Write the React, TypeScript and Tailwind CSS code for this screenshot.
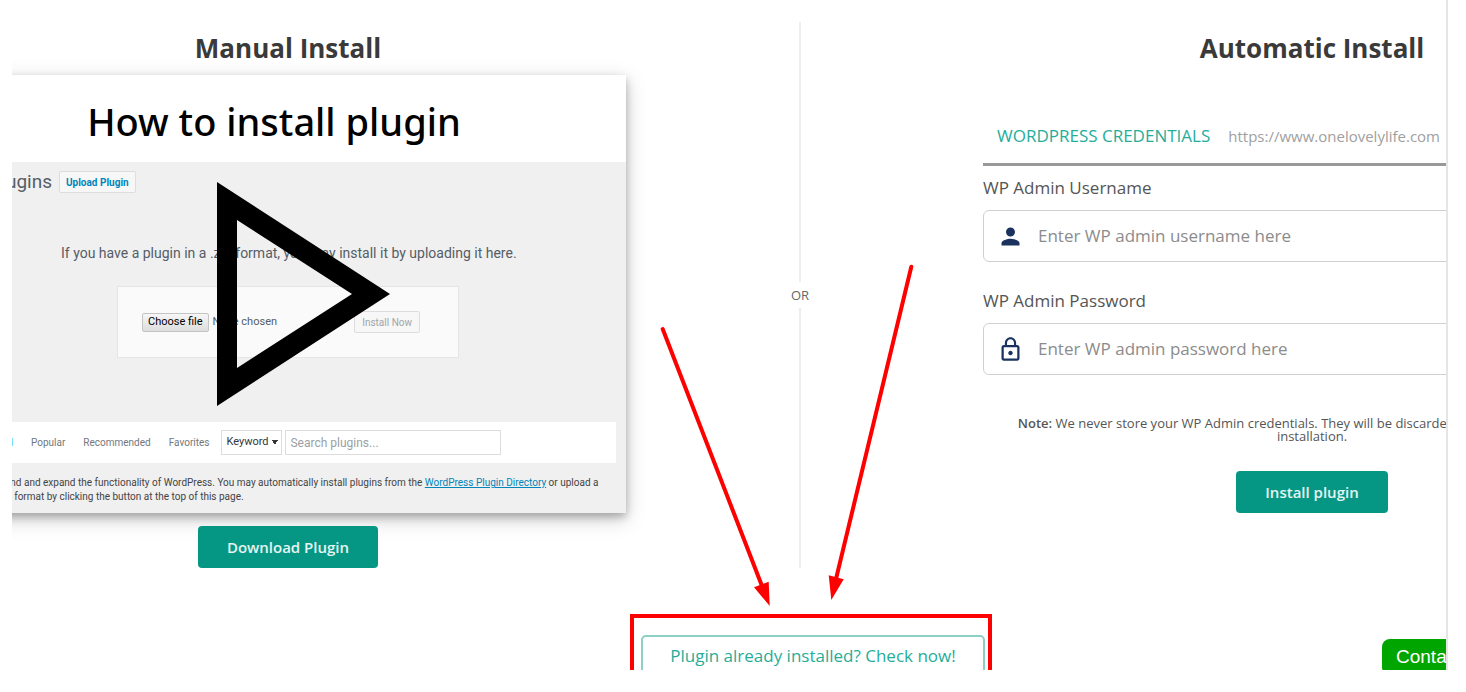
import React from "react";
import { MdLockOutline, MdPerson } from "react-icons/md";

const tabs = ["Popular", "Recommended", "Favorites"];

function VideoPreview() {
  return (
    <div className="relative w-full bg-[#f0f0f0] font-[Roboto,sans-serif] text-[#555d66] shadow-[0_4px_8px_rgba(0,0,0,0.25),0_6px_20px_rgba(0,0,0,0.19)]">
      <div className="flex h-[87px] items-center justify-center bg-white pr-7 pt-1">
        <h3 className="font-['Noto_Sans',sans-serif] text-[38px] font-medium leading-10 text-black">How to install plugin</h3>
      </div>

      <div className="flex h-10 items-center gap-[7px]">
        <h4 className="w-[102px] text-right text-[19px] leading-6">Plugins</h4>
        <button type="button" className="h-[22px] rounded-xs border border-[#dddddd] bg-[#f7f7f7] px-1.5 text-[10px] font-bold text-[#0085ba]">
          Upload Plugin
        </button>
      </div>

      <p className="mt-[39px] pl-[111px] text-sm leading-6">If you have a plugin in a .zip format, you may install it by uploading it here.</p>

      <div className="ml-[167px] mt-[21px] flex h-[72px] w-[342px] items-center border border-[#e5e5e5] bg-[#fafafa] pl-6 pr-[38px] text-[11px]">
        <button type="button" className="h-[19px] rounded-xs border border-[#c4c4c4] bg-linear-to-b from-[#f6f6f6] to-[#dddddd] px-[5px] leading-4 text-black">
          Choose file
        </button>
        <span className="ml-1">None chosen</span>
        <button type="button" className="ml-auto h-[22px] rounded-xs border border-[#dddddd] bg-[#f7f7f7] px-[7px] text-[10px] text-[#a0a5aa]">
          Install Now
        </button>
      </div>

      <div className="mr-2.5 mt-16 flex h-[41px] items-center bg-white text-[10px]">
        <span className="w-[63px] text-right text-[#0073aa]">Featured</span>
        <nav className="ml-[18px] flex gap-[18px]">
          {tabs.map((tab) => (
            <a key={tab} href="#" className="text-[#72777c]">{tab}</a>
          ))}
        </nav>
        <select aria-label="Search by" className="ml-3 h-[25px] w-[61px] appearance-none border border-[#dddddd] bg-white bg-[linear-gradient(to_top_right,transparent_50%,#32373c_50%),linear-gradient(to_top_left,transparent_50%,#32373c_50%)] bg-[length:3px_5px] bg-[position:50px_9px,53px_9px] bg-no-repeat px-1 text-[11px] text-[#32373c]">
          <option>Keyword</option>
        </select>
        <input aria-label="Search plugins" placeholder="Search plugins..." className="ml-[3px] h-[25px] w-[216px] border border-[#dddddd] bg-white px-1 text-xs placeholder:text-[#9a9fa4]" />
      </div>

      <p className="whitespace-nowrap pb-[9px] pl-1.5 pt-[13px] text-[10px] leading-[14px] text-[#444444]">
        Plugins extend and expand the functionality of WordPress. You may automatically install plugins from the{" "}
        <a href="#" className="text-[#0085ba] underline">WordPress Plugin Directory</a> or upload a
        <br />
        plugin in .zip format by clicking the button at the top of this page.
      </p>

      <button type="button" aria-label="Play video" className="absolute left-[267px] top-[107px]">
        <svg width="173" height="224" viewBox="0 0 173 224" className="block">
          <path d="M0 0L173 112L0 224ZM20 38V186L135 112Z" fill="#000" fillRule="evenodd" />
        </svg>
      </button>
    </div>
  );
}

function Field({ id, label, placeholder, type, icon }: { id: string; label: string; placeholder: string; type: string; icon: React.ReactNode }) {
  return (
    <div>
      <label htmlFor={id} className="block text-[17px] leading-6 text-[#555555]">{label}</label>
      <div className="mt-2.5 flex h-[52px] items-center rounded-md border border-[#d0d0d0] pl-[13px] text-[#1b325f]">
        {icon}
        <input id={id} type={type} placeholder={placeholder} className="ml-3.5 min-w-0 flex-1 bg-transparent text-[17px] outline-none placeholder:text-[#8c8c8c]" />
      </div>
    </div>
  );
}

function Arrows() {
  return (
    <svg className="pointer-events-none absolute left-0 top-0" width="348" height="614" viewBox="626 0 348 614" aria-hidden="true">
      <g stroke="#ff0000" strokeWidth="4" strokeLinecap="round">
        <path d="M662.7 329L762 586" />
        <path d="M911.3 266.7L836 579" />
      </g>
      <path d="M769.7 606L754 587.3L768.7 581.7ZM831.3 600L828.7 575.3L843.7 579.3Z" fill="#ff0000" />
    </svg>
  );
}

export default function App() {
  return (
    <div className="bg-white pl-3 pr-[18px] font-['Open_Sans',sans-serif]">
      <div className="overflow-hidden border-r-2 border-[#e5e5e5]">
        <main className="flex h-[614px]">
          <section className="-ml-[62px] flex w-[676px] shrink-0 flex-col items-center">
            <h2 className="flex h-[75px] items-center pt-[21px] text-[26px] font-bold text-[#3a3a3a]">Manual Install</h2>
            <VideoPreview />
            <button type="button" className="relative mt-[13px] h-[42px] rounded bg-[#059783] px-[29px] text-[15px] font-semibold text-white/90">Download Plugin</button>
          </section>

          <div className="relative flex min-w-0 flex-1 flex-col items-center pb-[46px] pt-[22px]">
            <div className="w-0.5 flex-1 bg-[#eeeeee]" />
            <span className="py-1 text-[13px] leading-[18px] text-[#666666]">OR</span>
            <div className="w-0.5 flex-1 bg-[#eeeeee]" />
            <Arrows />
          </div>

          <section className="w-[472px] shrink-0 pl-[9px]">
            <div className="flex w-[658px] flex-col">
              <h2 className="flex h-[75px] items-center justify-center pt-[21px] text-[26px] font-bold text-[#3a3a3a]">Automatic Install</h2>
              <div className="mt-11 flex h-[47px] items-start gap-[18px] border-b-[3px] border-[#999999] px-3.5 pt-[5px]">
                <span className="text-[17px] leading-6 text-[#26ad9a]">WORDPRESS CREDENTIALS</span>
                <span className="text-[15px] leading-6 text-[#a0a0a0]">https://www.onelovelylife.com</span>
              </div>
              <form className="flex flex-col pt-2.5">
                <div className="flex flex-col gap-[27px]">
                  <Field id="username" type="text" label="WP Admin Username" placeholder="Enter WP admin username here" icon={<MdPerson size={27} />} />
                  <Field id="password" type="password" label="WP Admin Password" placeholder="Enter WP admin password here" icon={<MdLockOutline size={27} />} />
                </div>
                <p className="mt-[42px] px-6 text-center text-[13px] leading-[13px] text-[#555555]">
                  <b className="font-semibold">Note:</b> We never store your WP Admin credentials. They will be discarded immediately after plugin installation.
                </p>
                <button type="button" className="mt-7 h-[42px] self-center rounded bg-[#059783] px-[29px] text-[15px] font-semibold text-white/90">Install plugin</button>
              </form>
            </div>
          </section>
        </main>

        <footer className="flex h-14 items-start overflow-hidden">
          <div className="ml-[618px] h-20 w-[362px] shrink-0 border-4 border-[#ff0000] pl-[7px] pr-[3px] pt-[17px]">
            <button type="button" className="h-[42px] w-full rounded-[5px] border-2 border-[#8bcfc5] text-[17px] text-[#26ad9a]">Plugin already installed? Check now!</button>
          </div>
          <div className="ml-auto mt-[25px] w-16 shrink-0">
            <button type="button" className="h-9 w-32 rounded-lg bg-[#00a500] pl-3.5 text-left font-['Liberation_Sans',sans-serif] text-[19px] text-white">Contact us</button>
          </div>
        </footer>
      </div>
    </div>
  );
}
